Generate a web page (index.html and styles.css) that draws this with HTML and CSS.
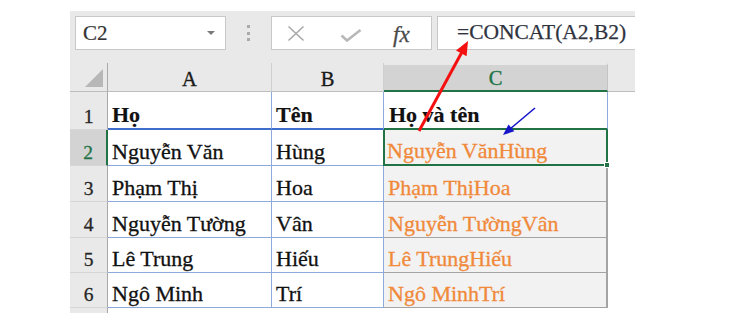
FILE: index.html
```html
<!DOCTYPE html>
<html lang="vi">
<head>
<meta charset="utf-8">
<title>CONCAT</title>
<link rel="stylesheet" href="styles.css">
</head>
<body>
<div class="sheet">
  <div class="toolbar">
    <div class="namebox"><span class="ref">C2</span><span class="caret"></span></div>
    <div class="grip"><i></i><i></i><i></i></div>
    <div class="fxbox">
      <svg class="ico-x" width="18" height="17" viewBox="0 0 18 17"><path d="M1.5 1.5 L16.5 15.5 M16.5 1.5 L1.5 15.5" stroke="#a9a9a9" stroke-width="1.6" fill="none"/></svg>
      <svg class="ico-check" width="22" height="13" viewBox="0 0 22 13"><path d="M1.5 6.5 L7 11.5 L20.5 1" stroke="#b8b8b8" stroke-width="2.6" fill="none"/></svg>
      <span class="fx">fx</span>
    </div>
    <div class="formula">=CONCAT(A2,B2)</div>
  </div>
  <div class="grid">
    <div class="corner"><span class="tri"></span></div>
    <div class="colh">A</div>
    <div class="colh">B</div>
    <div class="colh colsel">C</div>
    <div class="colh filler"></div>

    <div class="rowh">1</div>
    <div class="cell bold first">Họ</div>
    <div class="cell bold first">Tên</div>
    <div class="cell bold c1">Họ và tên</div>
    <div class="blank"></div>

    <div class="rowh rowsel">2</div>
    <div class="cell">Nguyễn Văn</div>
    <div class="cell">Hùng</div>
    <div class="cell out active">Nguyễn VănHùng</div>
    <div class="blank"></div>

    <div class="rowh">3</div>
    <div class="cell">Phạm Thị</div>
    <div class="cell">Hoa</div>
    <div class="cell out">Phạm ThịHoa</div>
    <div class="blank"></div>

    <div class="rowh">4</div>
    <div class="cell">Nguyễn Tường</div>
    <div class="cell">Vân</div>
    <div class="cell out">Nguyễn TườngVân</div>
    <div class="blank"></div>

    <div class="rowh">5</div>
    <div class="cell">Lê Trung</div>
    <div class="cell">Hiếu</div>
    <div class="cell out">Lê TrungHiếu</div>
    <div class="blank"></div>

    <div class="rowh">6</div>
    <div class="cell">Ngô Minh</div>
    <div class="cell">Trí</div>
    <div class="cell out">Ngô MinhTrí</div>
    <div class="blank"></div>

    <div class="rowh tail"></div>
    <div class="blank"></div>
    <div class="blank"></div>
    <div class="blank"></div>
    <div class="blank"></div>
  </div>
</div>
<svg class="arrows" width="750" height="329" viewBox="0 0 750 329">
  <line x1="419" y1="131" x2="462" y2="52" stroke="#f41010" stroke-width="3"/>
  <polygon points="468,41 466.6,56.2 456,50.4" fill="#f41010"/>
  <line x1="535" y1="108" x2="510" y2="129" stroke="#1515c8" stroke-width="1.6"/>
  <polygon points="503,135 514.3,131.3 508.5,124.5" fill="#1515c8"/>
</svg>
</body>
</html>
```
FILE: styles.css
```css
html, body {
  margin: 0;
  padding: 0;
  background: #ffffff;
}
body {
  width: 750px;
  height: 329px;
  position: relative;
  overflow: hidden;
  font-family: "Liberation Serif", "Times New Roman", serif;
}
.sheet {
  margin: 11px 0 0 70px;
  width: 565px;
}
.toolbar {
  background: #e9e9e9;
  height: 52px;
  box-sizing: border-box;
  padding: 5px 0 13px 5px;
  display: flex;
  align-items: stretch;
}
.namebox {
  width: 151px;
  box-sizing: border-box;
  background: #fff;
  border: 1px solid #c8c8c8;
  display: flex;
  align-items: center;
  justify-content: space-between;
  padding: 0 10px 0 7px;
}
.ref {
  font-size: 21px;
  color: #333;
  line-height: 1;
  -webkit-text-stroke: 0.2px #333;
}
.caret {
  width: 0;
  height: 0;
  border-left: 4px solid transparent;
  border-right: 4px solid transparent;
  border-top: 4px solid #7a7a7a;
}
.grip {
  width: 45px;
  display: flex;
  flex-direction: column;
  align-items: center;
  justify-content: center;
  gap: 3.5px;
}
.grip i {
  display: block;
  width: 3px;
  height: 3px;
  background: #ababab;
}
.fxbox {
  width: 161px;
  box-sizing: border-box;
  background: #fff;
  border: 1px solid #c8c8c8;
  display: flex;
  align-items: center;
  padding-left: 15px;
}
.ico-x { margin-top: 1px; }
.ico-check { margin-left: 35px; margin-top: 4px; }
.fx {
  margin-left: 31px;
  font-style: italic;
  font-size: 23px;
  color: #4a4a4a;
  line-height: 1;
  margin-top: 2px;
  -webkit-text-stroke: 0.3px #4a4a4a;
}
.formula {
  flex: 1;
  margin-left: 5px;
  background: #fff;
  border: 1px solid #c8c8c8;
  border-right: none;
  display: flex;
  align-items: center;
  padding-left: 19px;
  font-size: 21.5px;
  color: #2f3340;
  line-height: 1;
  -webkit-text-stroke: 0.25px #2f3340;
}
.grid {
  display: grid;
  grid-template-columns: 38px 164px 112px 224px 27px;
  grid-template-rows: 29px 38px 36px 36px 36px 35px 35px 5px;
}
.grid > div {
  box-sizing: border-box;
}
.corner {
  background: #e9e9e9;
  border-right: 1px solid #a9a9a9;
  border-bottom: 1px solid #bdbdbd;
  display: flex;
  align-items: flex-end;
  justify-content: flex-end;
  padding: 0 4px 4px 0;
}
.tri {
  width: 18px;
  height: 18px;
  background: #b7b7b7;
  clip-path: polygon(100% 0, 100% 100%, 0 100%);
}
.colh {
  background: #e9e9e9;
  border-right: 1px solid #cfcfcf;
  border-bottom: 1px solid #bdbdbd;
  display: flex;
  align-items: flex-end;
  justify-content: center;
  font-size: 20.5px;
  color: #1a1a1a;
  line-height: normal;
  -webkit-text-stroke: 0.35px currentColor;
}
.colsel {
  background: #d3d3d3;
  border-top: 2px solid #e9e9e9;
  color: #217346;
  border-bottom: 2px solid #217346;
  border-right: 1px solid #c4c4c4;
}
.filler {
  border-right: none;
}
.rowh {
  background: #e9e9e9;
  border-right: 1px solid #a9a9a9;
  border-bottom: 1px solid #d6d6d6;
  display: flex;
  align-items: flex-end;
  justify-content: center;
  font-size: 19.5px;
  color: #262626;
  line-height: normal;
  padding-bottom: 1px;
  -webkit-text-stroke: 0.3px currentColor;
}
.rowsel {
  background: #d3d3d3;
  color: #217346;
  border-right: 2px solid #217346;
}
.tail {
  border-bottom: none;
}
.cell {
  background: #fff;
  border-right: 1px solid #8ea9db;
  border-bottom: 1px solid #8ea9db;
  display: flex;
  align-items: flex-end;
  padding: 0 0 0 4px;
  font-size: 22px;
  color: #111;
  line-height: normal;
  white-space: nowrap;
  -webkit-text-stroke: 0.3px currentColor;
}
.bold {
  font-weight: bold;
  -webkit-text-stroke: 0.2px currentColor;
}
.first {
  border-bottom: 2px solid #3f6dcb;
}
.c1 {
  border-bottom: 2px solid #217346;
  padding-left: 5px;
}
.out {
  background: #f2f2f2;
  color: #f0893a;
  border-right: 2px solid #a4a4a4;
  border-bottom: 1px solid #a4a4a4;
  padding-left: 4px;
}
.active {
  position: relative;
  border-bottom: 2px solid #217346;
  border-right: 2px solid #217346;
  border-left: 2px solid #217346;
  padding-left: 2px;
  margin-left: -1px;
}
.active::after {
  content: "";
  position: absolute;
  right: -4px;
  bottom: -4px;
  width: 6px;
  height: 6px;
  background: #217346;
  border: 1px solid #fff;
  box-sizing: border-box;
}
.blank {
  background: #fff;
}
.arrows {
  position: absolute;
  left: 0;
  top: 0;
  pointer-events: none;
}
```
